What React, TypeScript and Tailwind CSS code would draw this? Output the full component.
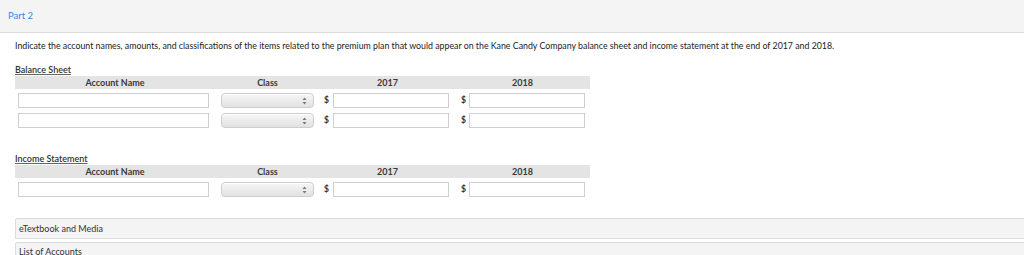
import React from 'react'

const cols = [
  { label: 'Account Name', w: 'w-[200px]' },
  { label: 'Class', w: 'w-[105px]' },
  { label: '2017', w: 'w-[135px]' },
  { label: '2018', w: 'w-[135px]' },
]

function Arrows() {
  return (
    <svg width="5" height="8" viewBox="0 0 5 8" className="text-[#7a7a7a]">
      <path d="M2.5 0.5 L4.5 3 L0.5 3 Z" fill="currentColor" />
      <path d="M2.5 7.5 L4.5 5 L0.5 5 Z" fill="currentColor" />
    </svg>
  )
}

function HeaderRow() {
  return (
    <div className="flex h-[13px] w-[575px] items-center bg-[#e4e4e4] text-[9px] font-bold text-[#3a3a3a]">
      {cols.map((c) => (
        <div key={c.label} className={`${c.w} text-center leading-none`}>
          {c.label}
        </div>
      ))}
    </div>
  )
}

function EntryRow() {
  return (
    <div className="flex h-[15px] w-[575px] items-center text-[8.5px] font-bold text-[#333]">
      <div className="w-[200px] h-full pl-[3px]">
        <div className="h-full w-[191px] border border-[#cfcfcf] bg-white" />
      </div>
      <div className="w-[105px] h-full pl-[6px]">
        <div className="flex h-full w-[93px] items-center justify-end rounded-[4px] border border-[#cdcdcd] bg-gradient-to-b from-[#f6f6f6] to-[#e2e2e2] pr-[6px] shadow-[inset_0_1px_0_#fff]">
          <Arrows />
        </div>
      </div>
      <div className="flex w-[135px] h-full items-center pl-[4px]">
        <span className="w-[9px] leading-none">$</span>
        <div className="h-full w-[116px] border border-[#cfcfcf] bg-white" />
      </div>
      <div className="flex w-[135px] h-full items-center pl-[6px]">
        <span className="w-[8px] leading-none">$</span>
        <div className="h-full w-[116px] border border-[#cfcfcf] bg-white" />
      </div>
    </div>
  )
}

function SectionTitle({ children }: { children: React.ReactNode }) {
  return (
    <div className="text-[9px] leading-[10px] font-semibold text-[#333] underline underline-offset-[1px] decoration-[#666]">
      {children}
    </div>
  )
}

export default function App() {
  return (
    <div className="w-[1024px] h-[255px] overflow-hidden bg-white font-['Lato','Liberation_Sans',sans-serif]">
      {/* Top bar */}
      <div className="flex h-[33px] items-center border-b border-[#dcdcdc] bg-[#f4f4f4] px-[8px] text-[9.5px] text-[#2a8ae6]">
        Part 2
      </div>

      <div className="pl-[15px]">
        <p className="mt-[7px] text-[8.8px] leading-[12px] text-[#222]">
          Indicate the account names, amounts, and classifications of the items related to the premium plan that would appear on the Kane Candy Company balance sheet and income statement at the end of 2017 and 2018.
        </p>

        {/* Balance Sheet */}
        <div className="mt-[13px]">
          <SectionTitle>Balance Sheet</SectionTitle>
        </div>
        <div className="mt-[1px]">
          <HeaderRow />
        </div>
        <div className="mt-[4px] flex flex-col gap-[5px]">
          <EntryRow />
          <EntryRow />
        </div>

        {/* Income Statement */}
        <div className="mt-[26px]">
          <SectionTitle>Income Statement</SectionTitle>
        </div>
        <div className="mt-[1px]">
          <HeaderRow />
        </div>
        <div className="mt-[4px]">
          <EntryRow />
        </div>

        {/* Accordions */}
        <div className="mt-[21px] flex flex-col gap-[3px]">
          <div className="flex h-[21px] w-[1020px] items-center rounded-tl-[2px] border border-[#dcdcdc] bg-[#f4f4f4] pl-[3px] text-[9px] text-[#333]">
            eTextbook and Media
          </div>
          <div className="flex h-[21px] w-[1020px] items-start rounded-tl-[2px] border border-[#dcdcdc] bg-[#f4f4f4] pl-[3px] pt-[3px] text-[9px] leading-[12px] text-[#333]">
            List of Accounts
          </div>
        </div>
      </div>
    </div>
  )
}
